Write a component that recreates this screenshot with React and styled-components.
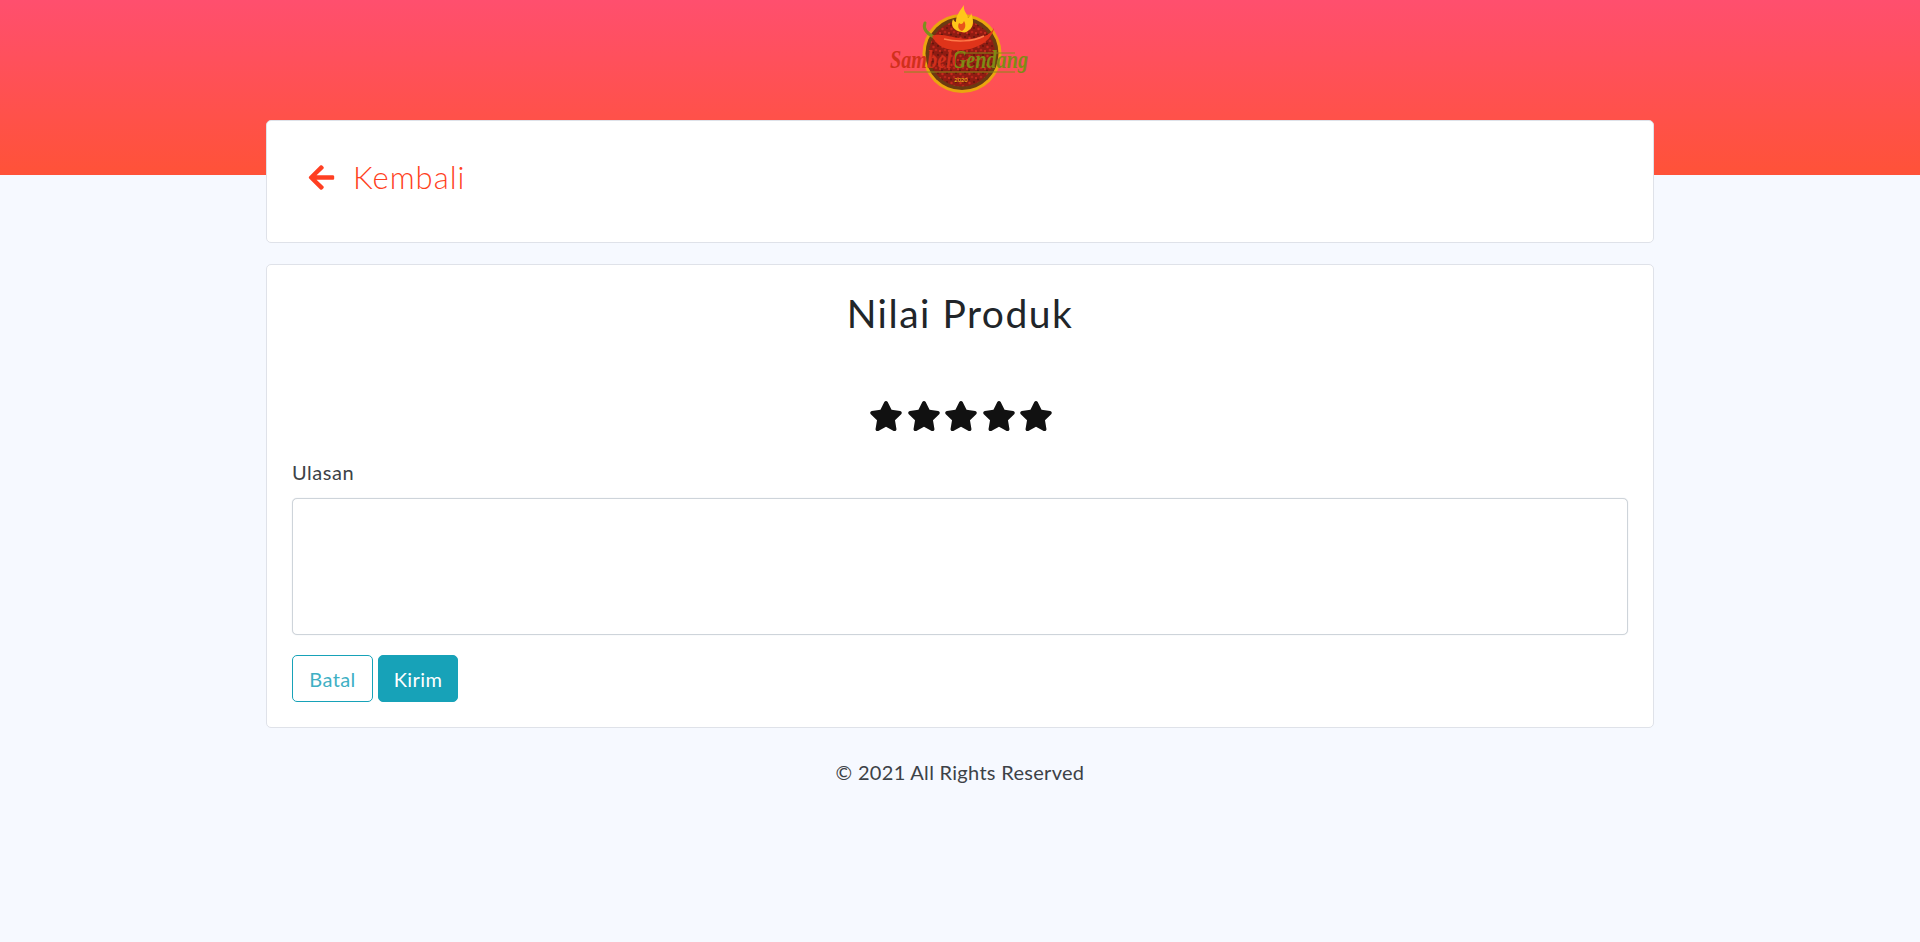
import React from "react";
import styled, { createGlobalStyle } from "styled-components";
import { FaArrowLeft, FaStar } from "react-icons/fa";

const Global = createGlobalStyle`
  html, body { margin: 0; padding: 0; background: #f6f9ff; }
  body { font-family: "Lato", "Noto Sans", sans-serif; color: #212529; }
`;
const Page = styled.div`min-height: 942px; display: flex; flex-direction: column;`;
const Hero = styled.header`
  height: 175px; flex: none; display: flex; justify-content: center; align-items: flex-start;
  background: linear-gradient(180deg, #ff4f6e 0%, #ff5238 100%);
`;
const Main = styled.main`
  width: 1388px; margin: -55px auto 0; display: flex; flex-direction: column; gap: 21px;
`;
const Card = styled.section`
  background: #fff; border: 1px solid #dfe2e9; border-radius: 5px; box-sizing: border-box;
`;
const BackCard = styled(Card)`
  height: 123px; display: flex; align-items: flex-start; padding: 31px 40px 0;
`;
const BackLink = styled.a`
  display: flex; align-items: center; gap: 17px; height: 50px; color: #ff3f22;
  font-size: 31px; font-weight: 300; letter-spacing: 1px; text-decoration: none;
`;
const FormCard = styled(Card)`
  height: 464px; padding: 26px 25px 0; display: flex; flex-direction: column;
`;
const Title = styled.h1`
  margin: 0; height: 44px; line-height: 44px; font-size: 39px; font-weight: 400;
  letter-spacing: 1.5px; text-align: center; color: #212529;
`;
const Stars = styled.div`
  margin-top: 63px; margin-left: 2px; height: 36px; display: flex; justify-content: center; gap: 3.5px;
  color: #111; font-size: 34px; align-items: center;
`;
const Label = styled.label`
  margin-top: 26px; font-size: 20px; line-height: 24px; font-weight: 400; letter-spacing: 0.55px; color: #3d4247;
`;
const TextArea = styled.textarea`
  display: block; box-sizing: border-box; width: 100%; height: 137px; margin-top: 14px;
  border: 1px solid #ced4da; border-radius: 5px; background: #fff; resize: none; outline: none;
  box-shadow: 0 0 1px #ced4da;
`;
const Actions = styled.div`margin-top: 20px; display: flex; gap: 5px;`;
const Button = styled.button`
  box-sizing: border-box; height: 47px; width: ${p => p.$w}px; border-radius: 5px;
  border: 1px solid #17a2b8; font: 400 20px "Lato", sans-serif;
  letter-spacing: 0.4px;
  background: ${p => (p.$solid ? "#17a2b8" : "#fff")};
  color: ${p => (p.$solid ? "#fff" : "#3fb0c4")};
`;
const Footer = styled.footer`
  margin-top: 11px; text-align: center; font-size: 20px; line-height: 24px; font-weight: 400;
  letter-spacing: 0.3px; color: #3d4247;
`;

const Logo = () => (
  <svg width="200" height="110" viewBox="0 0 200 110" aria-label="Sambel Gendang">
    <defs>
      <pattern id="chili-flakes" width="9" height="9" patternUnits="userSpaceOnUse">
        <rect width="9" height="9" fill="#8f1c12" />
        <circle cx="1.5" cy="2" r="1.2" fill="#c7281c" />
        <circle cx="6" cy="1" r="0.9" fill="#5c140c" />
        <circle cx="4" cy="5" r="1.3" fill="#b8241a" />
        <circle cx="8" cy="6" r="1" fill="#d0301f" />
        <circle cx="1" cy="7.5" r="0.9" fill="#5c140c" />
      </pattern>
      <linearGradient id="wordmark" gradientUnits="userSpaceOnUse" x1="30" y1="0" x2="168" y2="0">
        <stop offset="0.47" stopColor="#d0301c" />
        <stop offset="0.47" stopColor="#7f8a14" />
      </linearGradient>
    </defs>
    <circle cx="102" cy="53.5" r="39.5" fill="#eaa60e" />
    <circle cx="102" cy="53.5" r="36.5" fill="#6b3a12" />
    <circle cx="102" cy="53.5" r="33" fill="url(#chili-flakes)" />
    <path d="M102 32c-8-1-12-6-9-13 1 2 2 3 3 3 0-6 3-10 8-17-1 6 3 8 4 13 2-1 3-3 3-5 3 7 3 14-2 17-2 2-4 3-7 2z" fill="#ffc61a" />
    <path d="M102 31c-3-1-5-4-3-8 2 2 4 1 5-2 2 3 2 8-2 10z" fill="#e8531a" />
    <path d="M65 23c-2 5 1 10 9 14" fill="none" stroke="#7c8f1c" strokeWidth="3" strokeLinecap="round" />
    <path d="M72 36c8-4 20 2 36 3 12 0 22-3 26-11-2 12-16 21-31 22-15 1-25-2-31-14z" fill="#e0341a" />
    <path d="M84 39c12 3 28 3 40-3" fill="none" stroke="#ff7a4a" strokeWidth="1.5" />
    <line x1="44" y1="72" x2="155" y2="72" stroke="#8a8a16" strokeWidth="1" />
    <line x1="96" y1="53" x2="155" y2="53" stroke="#8a8a16" strokeWidth="1" />
    <text x="30" y="68" fontFamily="Liberation Serif, serif" fontStyle="italic" fontWeight="700" fontSize="25" textLength="138" lengthAdjust="spacingAndGlyphs" fill="url(#wordmark)">SambelGendang</text>
    <text x="101" y="82" textAnchor="middle" fontFamily="Liberation Sans, sans-serif" fontSize="6" fill="#ffc61a">2020</text>
  </svg>
);

export default function App() {
  return (
    <Page>
      <Global />
      <Hero><Logo /></Hero>
      <Main>
        <BackCard>
          <BackLink href="#"><FaArrowLeft size={29} />Kembali</BackLink>
        </BackCard>
        <FormCard>
          <Title>Nilai Produk</Title>
          <Stars>{[0, 1, 2, 3, 4].map(i => <FaStar key={i} />)}</Stars>
          <Label>Ulasan</Label>
          <TextArea />
          <Actions>
            <Button $w={81}>Batal</Button>
            <Button $w={80} $solid>Kirim</Button>
          </Actions>
        </FormCard>
        <Footer>© 2021 All Rights Reserved</Footer>
      </Main>
    </Page>
  );
}
